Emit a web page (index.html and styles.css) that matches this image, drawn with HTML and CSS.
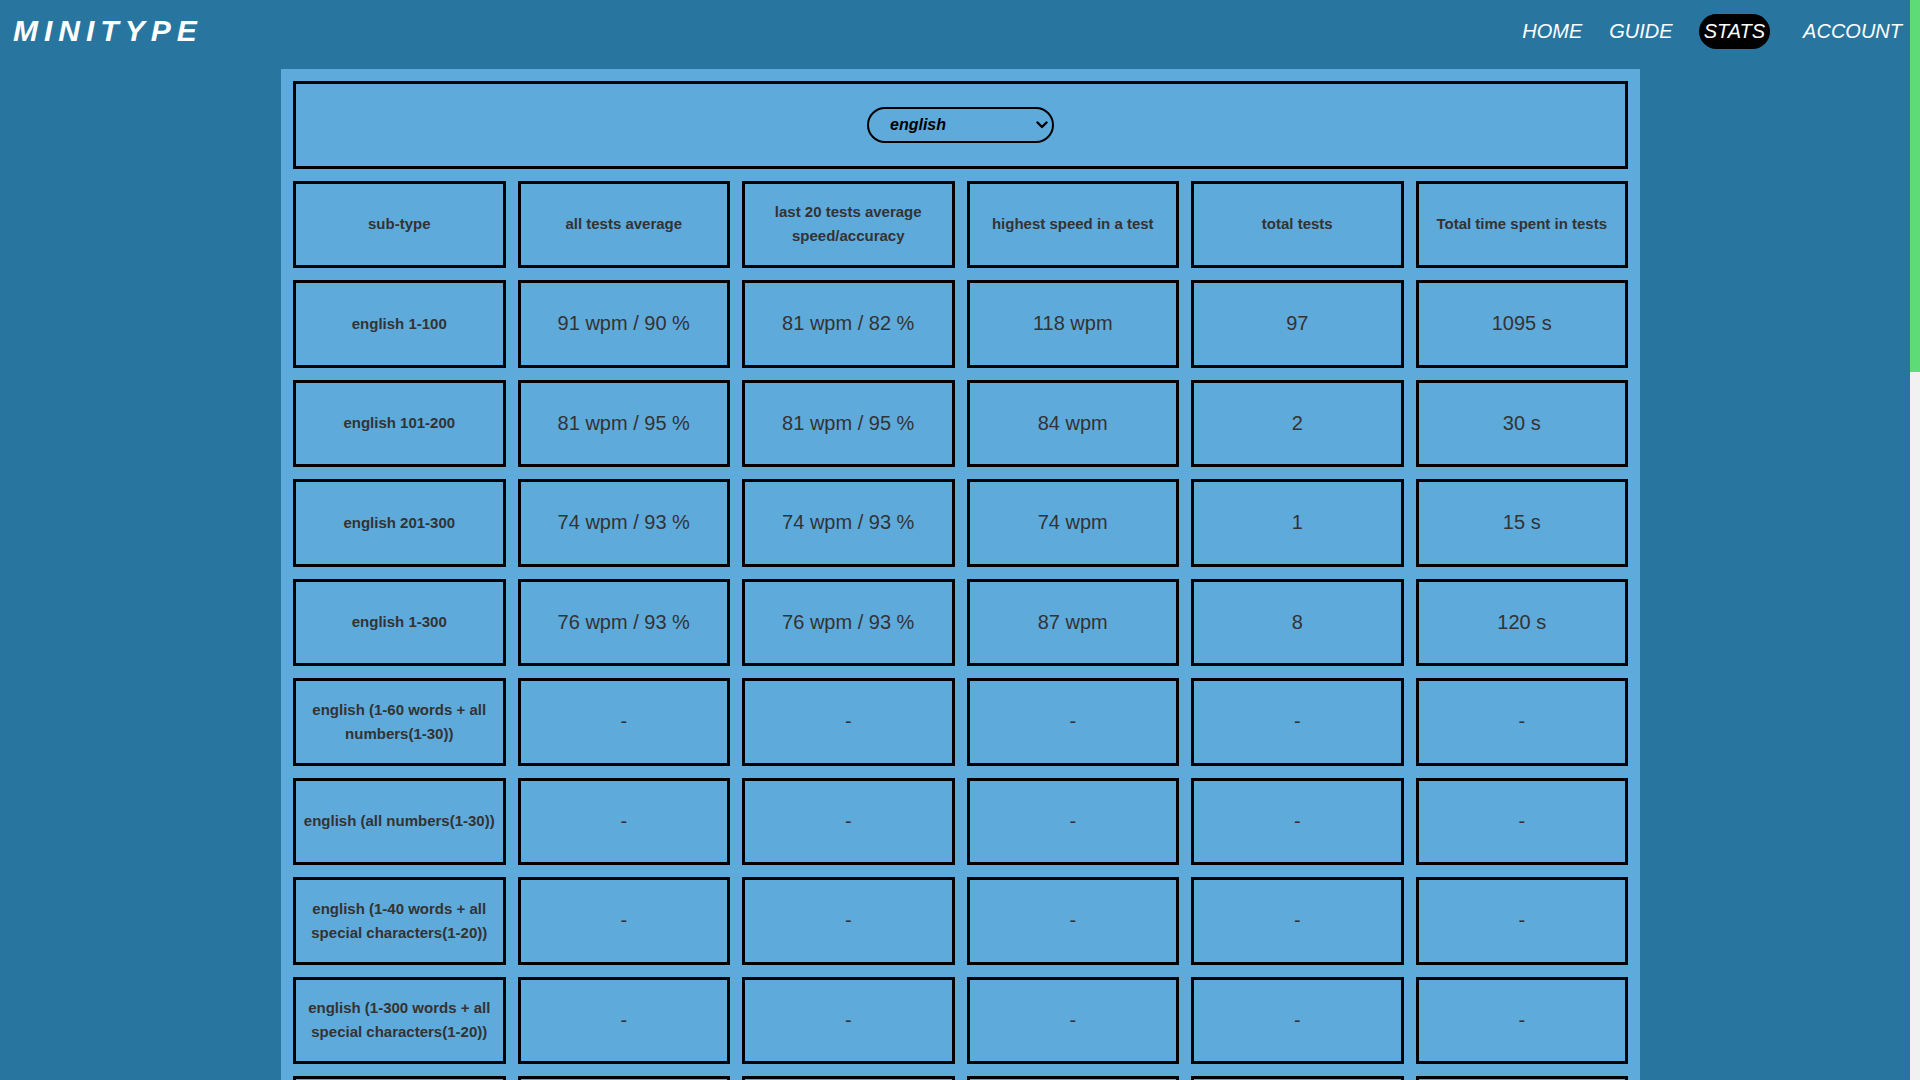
FILE: index.html
```html
<!DOCTYPE html>
<html lang="en">
<head>
<meta charset="utf-8">
<title>MINITYPE - stats</title>
<link rel="stylesheet" href="styles.css">
</head>
<body>
<header class="topbar">
  <div class="logo">MINITYPE</div>
  <nav class="nav">
    <a class="nav-link" href="#">HOME</a>
    <a class="nav-link" href="#">GUIDE</a>
    <a class="nav-link active" href="#">STATS</a>
    <a class="nav-link account" href="#">ACCOUNT</a>
  </nav>
</header>
<main class="panel">
  <div class="lang-box">
    <div class="lang-wrap">
      <select class="lang-select">
        <option>english</option>
      </select>
      <svg class="chevron" width="12" height="8" viewBox="0 0 12 8"><path d="M1.5 1.5 L6 6 L10.5 1.5" fill="none" stroke="#000" stroke-width="2.4" stroke-linecap="round" stroke-linejoin="round"/></svg>
    </div>
  </div>
  <div class="grid">
    <div class="cell head">sub-type</div>
    <div class="cell head">all tests average</div>
    <div class="cell head">last 20 tests average speed/accuracy</div>
    <div class="cell head">highest speed in a test</div>
    <div class="cell head">total tests</div>
    <div class="cell head">Total time spent in tests</div>

    <div class="cell label">english 1-100</div>
    <div class="cell">91 wpm / 90 %</div>
    <div class="cell">81 wpm / 82 %</div>
    <div class="cell">118 wpm</div>
    <div class="cell">97</div>
    <div class="cell">1095 s</div>

    <div class="cell label">english 101-200</div>
    <div class="cell">81 wpm / 95 %</div>
    <div class="cell">81 wpm / 95 %</div>
    <div class="cell">84 wpm</div>
    <div class="cell">2</div>
    <div class="cell">30 s</div>

    <div class="cell label">english 201-300</div>
    <div class="cell">74 wpm / 93 %</div>
    <div class="cell">74 wpm / 93 %</div>
    <div class="cell">74 wpm</div>
    <div class="cell">1</div>
    <div class="cell">15 s</div>

    <div class="cell label">english 1-300</div>
    <div class="cell">76 wpm / 93 %</div>
    <div class="cell">76 wpm / 93 %</div>
    <div class="cell">87 wpm</div>
    <div class="cell">8</div>
    <div class="cell">120 s</div>

    <div class="cell label">english (1-60 words + all numbers(1-30))</div>
    <div class="cell">-</div><div class="cell">-</div><div class="cell">-</div><div class="cell">-</div><div class="cell">-</div>

    <div class="cell label">english (all numbers(1-30))</div>
    <div class="cell">-</div><div class="cell">-</div><div class="cell">-</div><div class="cell">-</div><div class="cell">-</div>

    <div class="cell label">english (1-40 words + all special characters(1-20))</div>
    <div class="cell">-</div><div class="cell">-</div><div class="cell">-</div><div class="cell">-</div><div class="cell">-</div>

    <div class="cell label">english (1-300 words + all special characters(1-20))</div>
    <div class="cell">-</div><div class="cell">-</div><div class="cell">-</div><div class="cell">-</div><div class="cell">-</div>

    <div class="cell label">english (all special characters(1-20))</div>
    <div class="cell">-</div><div class="cell">-</div><div class="cell">-</div><div class="cell">-</div><div class="cell">-</div>

    <div class="cell label">english (1-300 words + all numbers(1-30))</div>
    <div class="cell">-</div><div class="cell">-</div><div class="cell">-</div><div class="cell">-</div><div class="cell">-</div>

    <div class="cell label">english 1-100 (capital letters)</div>
    <div class="cell">-</div><div class="cell">-</div><div class="cell">-</div><div class="cell">-</div><div class="cell">-</div>

    <div class="cell label">english 101-200 (capital letters)</div>
    <div class="cell">-</div><div class="cell">-</div><div class="cell">-</div><div class="cell">-</div><div class="cell">-</div>

    <div class="cell label">english 201-300 (capital letters)</div>
    <div class="cell">-</div><div class="cell">-</div><div class="cell">-</div><div class="cell">-</div><div class="cell">-</div>

    <div class="cell label">english 1-300 (capital letters)</div>
    <div class="cell">-</div><div class="cell">-</div><div class="cell">-</div><div class="cell">-</div><div class="cell">-</div>

    <div class="cell label">english (all numbers(1-30) + all special characters(1-20))</div>
    <div class="cell">-</div><div class="cell">-</div><div class="cell">-</div><div class="cell">-</div><div class="cell">-</div>

    <div class="cell label">english 1-100 (30 s)</div>
    <div class="cell">-</div><div class="cell">-</div><div class="cell">-</div><div class="cell">-</div><div class="cell">-</div>

    <div class="cell label">english 101-200 (30 s)</div>
    <div class="cell">-</div><div class="cell">-</div><div class="cell">-</div><div class="cell">-</div><div class="cell">-</div>

    <div class="cell label">english 201-300 (30 s)</div>
    <div class="cell">-</div><div class="cell">-</div><div class="cell">-</div><div class="cell">-</div><div class="cell">-</div>

    <div class="cell label">english 1-300 (30 s)</div>
    <div class="cell">-</div><div class="cell">-</div><div class="cell">-</div><div class="cell">-</div><div class="cell">-</div>

    <div class="cell label">english 1-100 (60 s)</div>
    <div class="cell">-</div><div class="cell">-</div><div class="cell">-</div><div class="cell">-</div><div class="cell">-</div>

    <div class="cell label">english 101-200 (60 s)</div>
    <div class="cell">-</div><div class="cell">-</div><div class="cell">-</div><div class="cell">-</div><div class="cell">-</div>

    <div class="cell label">english 201-300 (60 s)</div>
    <div class="cell">-</div><div class="cell">-</div><div class="cell">-</div><div class="cell">-</div><div class="cell">-</div>

    <div class="cell label">english 1-300 (60 s)</div>
    <div class="cell">-</div><div class="cell">-</div><div class="cell">-</div><div class="cell">-</div><div class="cell">-</div>

    <div class="cell label">english 1-100 (120 s)</div>
    <div class="cell">-</div><div class="cell">-</div><div class="cell">-</div><div class="cell">-</div><div class="cell">-</div>

    <div class="cell label">english 101-200 (120 s)</div>
    <div class="cell">-</div><div class="cell">-</div><div class="cell">-</div><div class="cell">-</div><div class="cell">-</div>

    <div class="cell label">english 201-300 (120 s)</div>
    <div class="cell">-</div><div class="cell">-</div><div class="cell">-</div><div class="cell">-</div><div class="cell">-</div>

    <div class="cell label">english 1-300 (120 s)</div>
    <div class="cell">-</div><div class="cell">-</div><div class="cell">-</div><div class="cell">-</div><div class="cell">-</div>

    <div class="cell label">english (1-300 words + capital letters)</div>
    <div class="cell">-</div><div class="cell">-</div><div class="cell">-</div><div class="cell">-</div><div class="cell">-</div>
  </div>
</main>
<div class="scrollbar" aria-hidden="true"><div class="scroll-thumb"></div></div>
</body>
</html>
```

FILE: styles.css
```css
html {
  background: #2876a0;
}
body {
  margin: 0;
  padding-right: 10px;
  background: #2876a0;
  font-family: "Liberation Sans", Arial, sans-serif;
}
.scrollbar {
  position: fixed;
  top: 0;
  right: 0;
  width: 10px;
  height: 100vh;
  background: #f1f1f1;
}
.scroll-thumb {
  height: 372px;
  background: #5cdb76;
}
.topbar {
  height: 62px;
  display: flex;
  align-items: center;
  justify-content: space-between;
  padding: 0 3px 0 13px;
}
.logo {
  color: #fff;
  font-size: 30px;
  font-weight: bold;
  font-style: italic;
  letter-spacing: 6px;
  line-height: 36px;
}
.nav {
  display: flex;
  align-items: center;
  gap: 17px;
}
.nav-link {
  color: #fff;
  text-decoration: none;
  font-style: italic;
  font-size: 20px;
  line-height: 23px;
  padding: 6px 5px;
  border-radius: 18px;
}
.nav-link.active {
  background: #000;
  margin: 0 11px 0 4px;
}
.panel {
  box-sizing: border-box;
  width: 1359px;
  margin: 7px 0 69px 281px;
  padding: 12px;
  background: #5eaadb;
}
.lang-box {
  box-sizing: border-box;
  height: 87.5px;
  border: 3px solid #000;
  display: flex;
  align-items: center;
  justify-content: center;
}
.lang-wrap {
  position: relative;
  width: 187px;
  height: 36px;
}
.lang-select {
  appearance: none;
  -webkit-appearance: none;
  box-sizing: border-box;
  width: 187px;
  height: 36px;
  border: 2px solid #000;
  border-radius: 18px;
  background: transparent;
  padding: 0 0 0 21px;
  font-family: "Liberation Sans", Arial, sans-serif;
  font-size: 16px;
  font-weight: bold;
  font-style: italic;
  color: #000;
  outline: none;
}
.chevron {
  position: absolute;
  right: 6px;
  top: 14px;
  pointer-events: none;
}
.grid {
  margin-top: 12px;
  display: grid;
  grid-template-columns: repeat(6, 1fr);
  grid-auto-rows: 87.5px;
  gap: 12px;
}
.cell {
  box-sizing: border-box;
  border: 3px solid #000;
  display: flex;
  align-items: center;
  justify-content: center;
  text-align: center;
  padding: 0 6px;
  color: #333;
  font-size: 20px;
}
.cell.head,
.cell.label {
  font-size: 15px;
  font-weight: bold;
  line-height: 24px;
}
```
